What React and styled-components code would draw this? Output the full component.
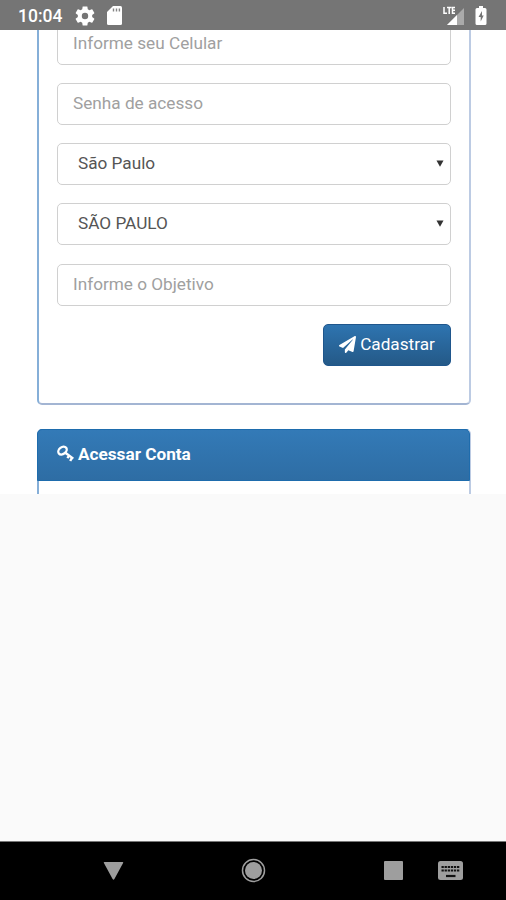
import styled, { createGlobalStyle } from 'styled-components';
import { FaPaperPlane } from 'react-icons/fa';

const GlobalStyle = createGlobalStyle`
  * {
    box-sizing: border-box;
  }
  body {
    margin: 0;
    background: #fafafa;
    font-family: Roboto, 'Liberation Sans', sans-serif;
  }
`;
const Screen = styled.div`
  width: 506px;
  height: 900px;
  display: flex;
  flex-direction: column;
  overflow: hidden;
`;
const StatusBar = styled.header`
  height: 30px;
  flex: none;
  display: flex;
  align-items: center;
  padding: 1px 18px 0;
  background: #757575;
  color: #fff;
`;
const Clock = styled.span`
  width: 57px;
  font-size: 17.5px;
  font-weight: 500;
  line-height: 20px;
`;
const StatusIcon = styled.svg`
  display: block;
  flex: none;
  margin-left: ${(props) => props.$left || 0};
`;
const Page = styled.main`
  height: 464px;
  flex: none;
  display: flex;
  flex-direction: column;
  justify-content: flex-end;
  gap: 24px;
  padding: 0 35px 0 37px;
  overflow: hidden;
  background: #fff;
`;
const Panel = styled.section`
  flex: none;
  border: solid;
  border-width: 1px 2px 2px;
  border-color: #337ab7 #bccbe3 #a3b5d3 #86afd8;
  border-radius: 5px;
`;
const PanelHeading = styled.h3`
  display: flex;
  align-items: center;
  gap: 4px;
  height: 52px;
  margin: -1px -1px 0 -2px;
  padding: 0 18px 3px 19px;
  border: 1px solid #1e6cad;
  border-radius: 5px 5px 0 0;
  background: linear-gradient(#337ab7, #2e6da4);
  color: #fff;
  font-size: 17.2px;
  font-weight: 700;
`;
const Form = styled.form`
  display: flex;
  flex-direction: column;
  gap: 18.3px;
  padding: 18px 18px 37px;
`;
const Input = styled.input`
  width: 100%;
  height: 42px;
  padding: 0 15px 1px;
  border: 1.5px solid #d0d0d0;
  border-radius: 5px;
  outline: none;
  background: #fff;
  font-family: inherit;
  font-size: 17.2px;
  &::placeholder {
    color: #a0a0a0;
  }
`;
const Select = styled.button`
  display: flex;
  align-items: center;
  justify-content: space-between;
  width: 100%;
  height: 42px;
  padding: 0 6px 2px 20px;
  border: 1.5px solid #d0d0d0;
  border-radius: 5px;
  background: #fff;
  color: #555;
  font-family: inherit;
  font-size: 17.2px;
`;
const Submit = styled.button`
  display: flex;
  align-items: center;
  justify-content: center;
  gap: 4px;
  align-self: flex-end;
  width: 128px;
  height: 42px;
  padding: 0 0 2px;
  border: 1px solid #1f568c;
  border-radius: 5px;
  background: linear-gradient(#2e74b0, #245987);
  color: #fff;
  font-family: inherit;
  font-size: 17.2px;
`;
const NextBody = styled.div`
  height: 13px;
`;
const NextPanel = styled(Panel)`
  border-bottom: none;
  border-radius: 5px 5px 0 0;
`;
const NavBar = styled.nav`
  height: 59px;
  flex: none;
  display: flex;
  align-items: center;
  margin-top: auto;
  padding: 0 0 1px 103px;
  border-top: 1px solid #777;
  background: #000;
  color: #9e9e9e;
`;

function Arrow() {
  return (
    <svg width="8" height="7" viewBox="0 0 8 7">
      <path d="M.5.5h7L4 6.8z" fill="#333" />
    </svg>
  );
}

function KeyIcon() {
  return (
    <svg width="17" height="17" viewBox="0 0 17 17" fill="none" stroke="#fff">
      <ellipse
        cx="5.5"
        cy="5.6"
        rx="4.6"
        ry="3.4"
        strokeWidth="2.3"
        transform="rotate(-38 5.5 5.6)"
      />
      <path
        d="M8.3 7.7l8 5.9M13.2 16l2-3.800M10.400 13.200l2.200-3.400"
        strokeWidth="2.4"
      />
    </svg>
  );
}

function SelectField({ value }) {
  return (
    <Select type="button">
      {value}
      <Arrow />
    </Select>
  );
}

function SystemStatus() {
  return (
    <StatusBar>
      <Clock>10:04</Clock>
      <StatusIcon width="20" height="20" viewBox="2 2 20 20" fill="#fff">
        <path d="M19.14 12.94c.04-.3.06-.61.06-.94 0-.32-.02-.64-.07-.94l2.03-1.58c.18-.14.23-.41.12-.61l-1.92-3.32c-.12-.22-.37-.29-.59-.22l-2.39.96c-.5-.38-1.03-.7-1.62-.94l-.36-2.54c-.04-.24-.24-.41-.48-.41h-3.84c-.24 0-.43.17-.47.41l-.36 2.54c-.59.24-1.13.57-1.62.94l-2.39-.96c-.22-.08-.47 0-.59.22L2.74 8.87c-.12.21-.08.47.12.61l2.03 1.58c-.05.3-.09.63-.09.94s.02.64.07.94l-2.03 1.58c-.18.14-.23.41-.12.61l1.92 3.32c.12.22.37.29.59.22l2.39-.96c.5.38 1.03.7 1.62.94l.36 2.54c.05.24.24.41.48.41h3.84c.24 0 .44-.17.47-.41l.36-2.54c.59-.24 1.13-.56 1.62-.94l2.39.96c.22.08.47 0 .59-.22l1.92-3.32c.12-.22.07-.47-.12-.61l-2.01-1.58zM12 15.2a3.2 3.2 0 1 1 0-6.4 3.2 3.2 0 0 1 0 6.4z" />
      </StatusIcon>
      <StatusIcon $left="12px" width="16" height="19" viewBox="0 0 16 19">
        <path
          d="M6 0h7.5Q15 0 15 1.5v16Q15 19 13.5 19h-12Q0 19 0 17.5V6z"
          fill="#fff"
        />
        <path d="M6.5 2.5v3M9.5 2.5v3M12.4 2.5v3" stroke="#858585" strokeWidth="1.4" />
      </StatusIcon>
      <StatusIcon $left="auto" width="23" height="20" viewBox="0 0 23 20">
        <path d="M22 2v17H5z" fill="#aaa" />
        <path d="M15 9v10H5z" fill="#fff" />
        <path
          d="M2 1v6.300h3M5 1.500h4.500M7.200 1.500V8M13 1.500h-2.500v5.800H13M10.500 4.300H13"
          fill="none"
          stroke="#fff"
          strokeWidth="1.5"
        />
      </StatusIcon>
      <StatusIcon $left="10px" width="13" height="19" viewBox="0 0 13 19">
        <path
          d="M4 0h4v2h2q1.5 0 1.5 1.5v14Q11.5 19 10 19H2Q.5 19 .5 17.5v-14Q.5 2 2 2h2z"
          fill="#fff"
        />
        <path d="M7 5L3.5 11h2.200v4.500L8.700 9.500H7z" fill="#757575" />
      </StatusIcon>
    </StatusBar>
  );
}

function Navigation() {
  return (
    <NavBar>
      <StatusIcon width="22" height="20" viewBox="0 0 22 20" fill="#9e9e9e">
        <path d="M1.5 1h18q1.200 0 .6 1l-8.700 16q-.9 1.400-1.800 0L.9 2q-.6-1 .6-1z" />
      </StatusIcon>
      <StatusIcon $left="116px" width="25" height="25" viewBox="0 0 25 25">
        <circle cx="12.5" cy="12.5" r="11" fill="none" stroke="#9e9e9e" strokeWidth="1.5" />
        <circle cx="12.5" cy="12.5" r="8.5" fill="#9e9e9e" />
      </StatusIcon>
      <StatusIcon $left="118px" width="19" height="19" viewBox="0 0 19 19">
        <rect width="19" height="19" rx="1" fill="#9e9e9e" />
      </StatusIcon>
      <StatusIcon $left="35px" width="25" height="19" viewBox="0 0 25 19">
        <rect width="25" height="19" rx="2.5" fill="#9e9e9e" />
        <path
          d="M3.5 6h18M3.5 9.5h18"
          stroke="#111"
          strokeWidth="2.2"
          strokeDasharray="2.3 .8"
        />
        <path d="M8 15h9.5" stroke="#111" strokeWidth="2.2" />
      </StatusIcon>
    </NavBar>
  );
}

function App() {
  return (
    <>
      <GlobalStyle />
      <Screen>
        <SystemStatus />
        <Page>
          <Panel>
            <Form>
              <Input placeholder="Informe seu Celular" />
              <Input type="password" placeholder="Senha de acesso" />
              <SelectField value="São Paulo" />
              <SelectField value="SÃO PAULO" />
              <Input placeholder="Informe o Objetivo" />
              <Submit type="button">
                <FaPaperPlane size={17} />
                Cadastrar
              </Submit>
            </Form>
          </Panel>
          <NextPanel>
            <PanelHeading>
              <KeyIcon />
              Acessar Conta
            </PanelHeading>
            <NextBody />
          </NextPanel>
        </Page>
        <Navigation />
      </Screen>
    </>
  );
}

export default App;
